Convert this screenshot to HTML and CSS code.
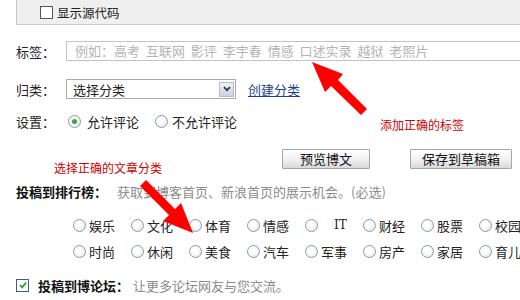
FILE: index.html
```html
<!DOCTYPE html>
<html lang="zh-CN">
<head>
<meta charset="utf-8">
<title>发博文</title>
<link rel="stylesheet" href="styles.css">
</head>
<body>
<div class="page">
  <div class="source-panel">
    <span class="checkbox"></span>
    <span class="source-text">显示源代码</span>
  </div>

  <div class="form-row tag-row">
    <span class="field-label">标签：</span>
    <div class="text-input">例如：高考 互联网 影评 李宇春 情感 口述实录 越狱 老照片</div>
  </div>

  <div class="form-row cat-row">
    <span class="field-label">归类：</span>
    <div class="select">
      <span class="select-value">选择分类</span>
      <span class="select-btn"><svg width="8" height="6" viewBox="0 0 8 6"><path d="M1 1.2 L4 4.2 L7 1.2" fill="none" stroke="#2b3a55" stroke-width="1.8"/></svg></span>
    </div>
    <a class="create-link" href="#">创建分类</a>
  </div>

  <div class="form-row settings-row">
    <span class="field-label">设置：</span>
    <span class="radio checked"></span><span class="opt">允许评论</span>
    <span class="radio second"></span><span class="opt">不允许评论</span>
  </div>

  <div class="button-row">
    <button class="btn btn-preview">预览博文</button>
    <button class="btn btn-save">保存到草稿箱</button>
  </div>

  <div class="section-row">
    <b class="section-title">投稿到排行榜：</b>
    <span class="hint">获取到博客首页、新浪首页的展示机会。(必选)</span>
  </div>

  <div class="channel-grid">
    <span class="chan"><span class="radio"></span>娱乐</span>
    <span class="chan"><span class="radio"></span>文化</span>
    <span class="chan"><span class="radio"></span>体育</span>
    <span class="chan"><span class="radio"></span>情感</span>
    <span class="chan"><span class="radio"></span><span class="it">IT</span></span>
    <span class="chan"><span class="radio"></span>财经</span>
    <span class="chan"><span class="radio"></span>股票</span>
    <span class="chan"><span class="radio"></span>校园</span>
    <span class="chan"><span class="radio"></span>时尚</span>
    <span class="chan"><span class="radio"></span>休闲</span>
    <span class="chan"><span class="radio"></span>美食</span>
    <span class="chan"><span class="radio"></span>汽车</span>
    <span class="chan"><span class="radio"></span>军事</span>
    <span class="chan"><span class="radio"></span>房产</span>
    <span class="chan"><span class="radio"></span>家居</span>
    <span class="chan"><span class="radio"></span>育儿</span>
  </div>

  <div class="forum-row">
    <span class="checkbox checked"><svg width="10" height="10" viewBox="0 0 10 10"><path d="M2 5 L4.2 7.3 L8.2 2.5" fill="none" stroke="#23a023" stroke-width="1.8"/></svg></span>
    <b class="section-title">投稿到博论坛：</b>
    <span class="hint">让更多论坛网友与您交流。</span>
  </div>

  <div class="note note-tag">添加正确的标签</div>
  <div class="note note-cat">选择正确的文章分类</div>

  <svg class="arrows" width="520" height="300" viewBox="0 0 520 300">
    <polygon points="312,62 343,74 338,80 367,109 361,115 331,86 325,92" fill="#ff0000"/>
    <polygon points="193,233 181,203 175,209 146,180 140,186 169,215 163,221" fill="#ff0000"/>
  </svg>
</div>
</body>
</html>
```

FILE: styles.css
```css
html, body {
  margin: 0;
  padding: 0;
  background: #fff;
}

.page {
  position: relative;
  width: 520px;
  height: 300px;
  overflow: hidden;
  font-family: "Noto Sans CJK SC", "Noto Sans", sans-serif;
  font-size: 13px;
  color: #222;
}

.source-panel {
  margin-left: 16px;
  height: 23px;
  background: #efefef;
  border-left: 1px solid #c9c9c9;
  border-bottom: 1px solid #c9c9c9;
  display: flex;
  align-items: center;
  padding-left: 23px;
  padding-top: 1px;
}

.checkbox {
  display: inline-flex;
  align-items: center;
  justify-content: center;
  width: 11px;
  height: 11px;
  border: 1px solid #555;
  background: #fff;
  box-sizing: content-box;
}

.source-text {
  margin-left: 4px;
  font-size: 12.5px;
}

.form-row {
  display: flex;
  align-items: center;
  padding-left: 16px;
  height: 20px;
}

.field-label {
  width: 50px;
  flex: none;
}

.tag-row {
  margin-top: 16px;
}

.text-input {
  flex: none;
  width: 470px;
  height: 18px;
  line-height: 18px;
  border: 1px solid #c3c3c3;
  padding-left: 8px;
  color: #b4b4b4;
  white-space: nowrap;
  box-sizing: content-box;
  word-spacing: 3px;
}

.cat-row {
  margin-top: 18px;
}

.select {
  width: 168px;
  height: 18px;
  border: 1px solid #a9a9a9;
  display: flex;
  align-items: center;
  justify-content: space-between;
}

.select-value {
  padding-left: 6px;
}

.select-btn {
  width: 15px;
  height: 15px;
  margin-right: 1px;
  background: linear-gradient(#eef1f6, #c9d2df);
  border: 1px solid #b3bccb;
  display: flex;
  align-items: center;
  justify-content: center;
  box-sizing: border-box;
}

.create-link {
  margin-left: 12px;
  color: #1b3f8f;
  text-decoration: underline;
}

.settings-row {
  margin-top: 12px;
}

.radio {
  display: inline-block;
  flex: none;
  width: 11px;
  height: 11px;
  border-radius: 50%;
  border: 1px solid #8a9aab;
  background: radial-gradient(circle at 40% 40%, #ffffff 30%, #dfe3e8 100%);
  box-sizing: content-box;
  position: relative;
}

.radio.checked::after {
  content: "";
  position: absolute;
  left: 3px;
  top: 3px;
  width: 5px;
  height: 5px;
  border-radius: 50%;
  background: #3aa63a;
}

.settings-row .radio {
  margin-left: 2px;
}

.settings-row .opt {
  margin-left: 6px;
}

.settings-row .radio.second {
  margin-left: 16px;
}

.settings-row .radio.second + .opt {
  margin-left: 4px;
}

.button-row {
  margin-top: 18px;
  padding-left: 282px;
  display: flex;
  gap: 40px;
}

.btn {
  height: 20px;
  padding: 0;
  font-family: inherit;
  font-size: 13px;
  color: #111;
  border: 1px solid #a6a6a6;
  border-radius: 1px;
  background: linear-gradient(#ffffff, #f2f2f2 50%, #d8d8d8);
  line-height: 18px;
}

.btn-preview {
  width: 88px;
}

.btn-save {
  width: 102px;
}

.section-row {
  margin-top: 14px;
  padding-left: 16px;
  height: 16px;
  display: flex;
  align-items: center;
}

.section-title {
  font-weight: bold;
  color: #111;
}

.hint {
  color: #8c8c8c;
  margin-left: 10px;
}

.channel-grid {
  margin-top: 13px;
  padding-left: 73px;
  display: grid;
  grid-template-columns: repeat(8, 58px);
  grid-auto-rows: 26px;
  align-items: center;
}

.chan {
  display: flex;
  align-items: center;
  white-space: nowrap;
}

.chan .radio {
  margin-right: 3px;
}

.chan .it {
  margin-left: 13px;
  font-family: "DejaVu Serif", serif;
  font-size: 12px;
}

.forum-row {
  margin-top: 13px;
  padding-left: 16px;
  height: 16px;
  display: flex;
  align-items: center;
}

.forum-row .checkbox {
  border-color: #3f5d7e;
  margin-right: 9px;
}

.forum-row .hint {
  margin-left: 4px;
}

.note {
  position: absolute;
  color: #d00000;
  font-size: 12px;
  white-space: nowrap;
}

.note-tag {
  left: 380px;
  top: 116px;
}

.note-cat {
  left: 54px;
  top: 159px;
}

.arrows {
  position: absolute;
  left: 0;
  top: 0;
  pointer-events: none;
}
```
